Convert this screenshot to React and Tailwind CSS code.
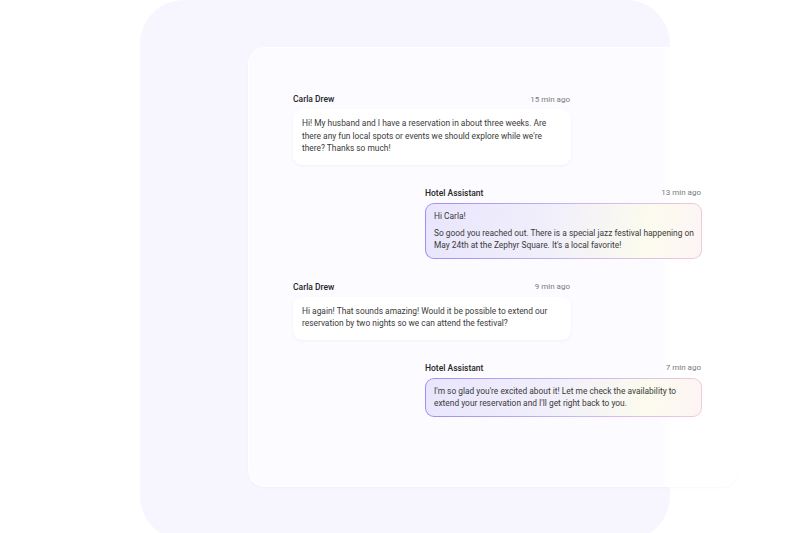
import React from 'react';

const messages = [
  {
    from: 'guest',
    name: 'Carla Drew',
    time: '15 min ago',
    text: ["Hi! My husband and I have a reservation in about three weeks. Are there any fun local spots or events we should explore while we're there? Thanks so much!"],
  },
  {
    from: 'bot',
    name: 'Hotel Assistant',
    time: '13 min ago',
    text: ['Hi Carla!', "So good you reached out. There is a special jazz festival happening on May 24th at the Zephyr Square. It's a local favorite!"],
  },
  {
    from: 'guest',
    name: 'Carla Drew',
    time: '9 min ago',
    text: ['Hi again! That sounds amazing! Would it be possible to extend our reservation by two nights so we can attend the festival?'],
  },
  {
    from: 'bot',
    name: 'Hotel Assistant',
    time: '7 min ago',
    text: ["I'm so glad you're excited about it! Let me check the availability to extend your reservation and I'll get right back to you."],
  },
];

const Message = ({ m }) => {
  const bot = m.from === 'bot';
  return (
    <div className={`flex flex-col gap-[4px] ${bot ? 'self-end w-[277px]' : 'self-start w-[278px]'}`}>
      <div className="flex justify-between items-center h-[11px]">
        <span className="text-[8.5px] font-medium text-[#262626]">{m.name}</span>
        <span className="text-[8px] text-[#7a7a7a] pr-[1px]">{m.time}</span>
      </div>
      {bot ? (
        <div className="rounded-[9px] p-px bg-[linear-gradient(90deg,#a48bf0_0%,#c9b6f2_55%,#f1c9dc_100%)]">
          <div className="rounded-[8px] pl-[8px] pr-[4px] py-[6px] flex flex-col gap-[4.5px] bg-[linear-gradient(100deg,#e9e5fd_0%,#f1effb_45%,#fcfbee_80%,#fdf5f5_100%)]">
            {m.text.map((t, i) => (
              <p key={i} className="text-[8.4px] leading-[12.5px] text-[#3a3a3a]">{t}</p>
            ))}
          </div>
        </div>
      ) : (
        <div className="rounded-[9px] bg-white px-[9px] pt-[8px] pb-[10px] shadow-[0_1px_3px_rgba(60,40,120,0.05)]">
          {m.text.map((t, i) => (
            <p key={i} className="text-[8.4px] leading-[12.5px] text-[#3a3a3a]">{t}</p>
          ))}
        </div>
      )}
    </div>
  );
};

export default function App() {
  return (
    <div className="w-[800px] h-[533px] bg-white overflow-hidden" style={{ fontFamily: 'Roboto, "Liberation Sans", sans-serif' }}>
      <div className="ml-[140px] w-[530px] h-[540px] rounded-[44px] bg-[#f7f5fe] pt-[47px] pl-[108px]">
        <div className="w-[490px] h-[440px] rounded-[16px] border border-white bg-[linear-gradient(90deg,#fcfbff_0%,#fcfbff_84%,#ffffff_87%,#ffffff_100%)] shadow-[0_1px_2px_rgba(90,70,160,0.04)] pl-[44px] pr-[38px] pt-[46px]">
          <div className="flex flex-col gap-[23px] w-[409px]">
            {messages.map((m, i) => (
              <Message key={i} m={m} />
            ))}
          </div>
        </div>
      </div>
    </div>
  );
}
